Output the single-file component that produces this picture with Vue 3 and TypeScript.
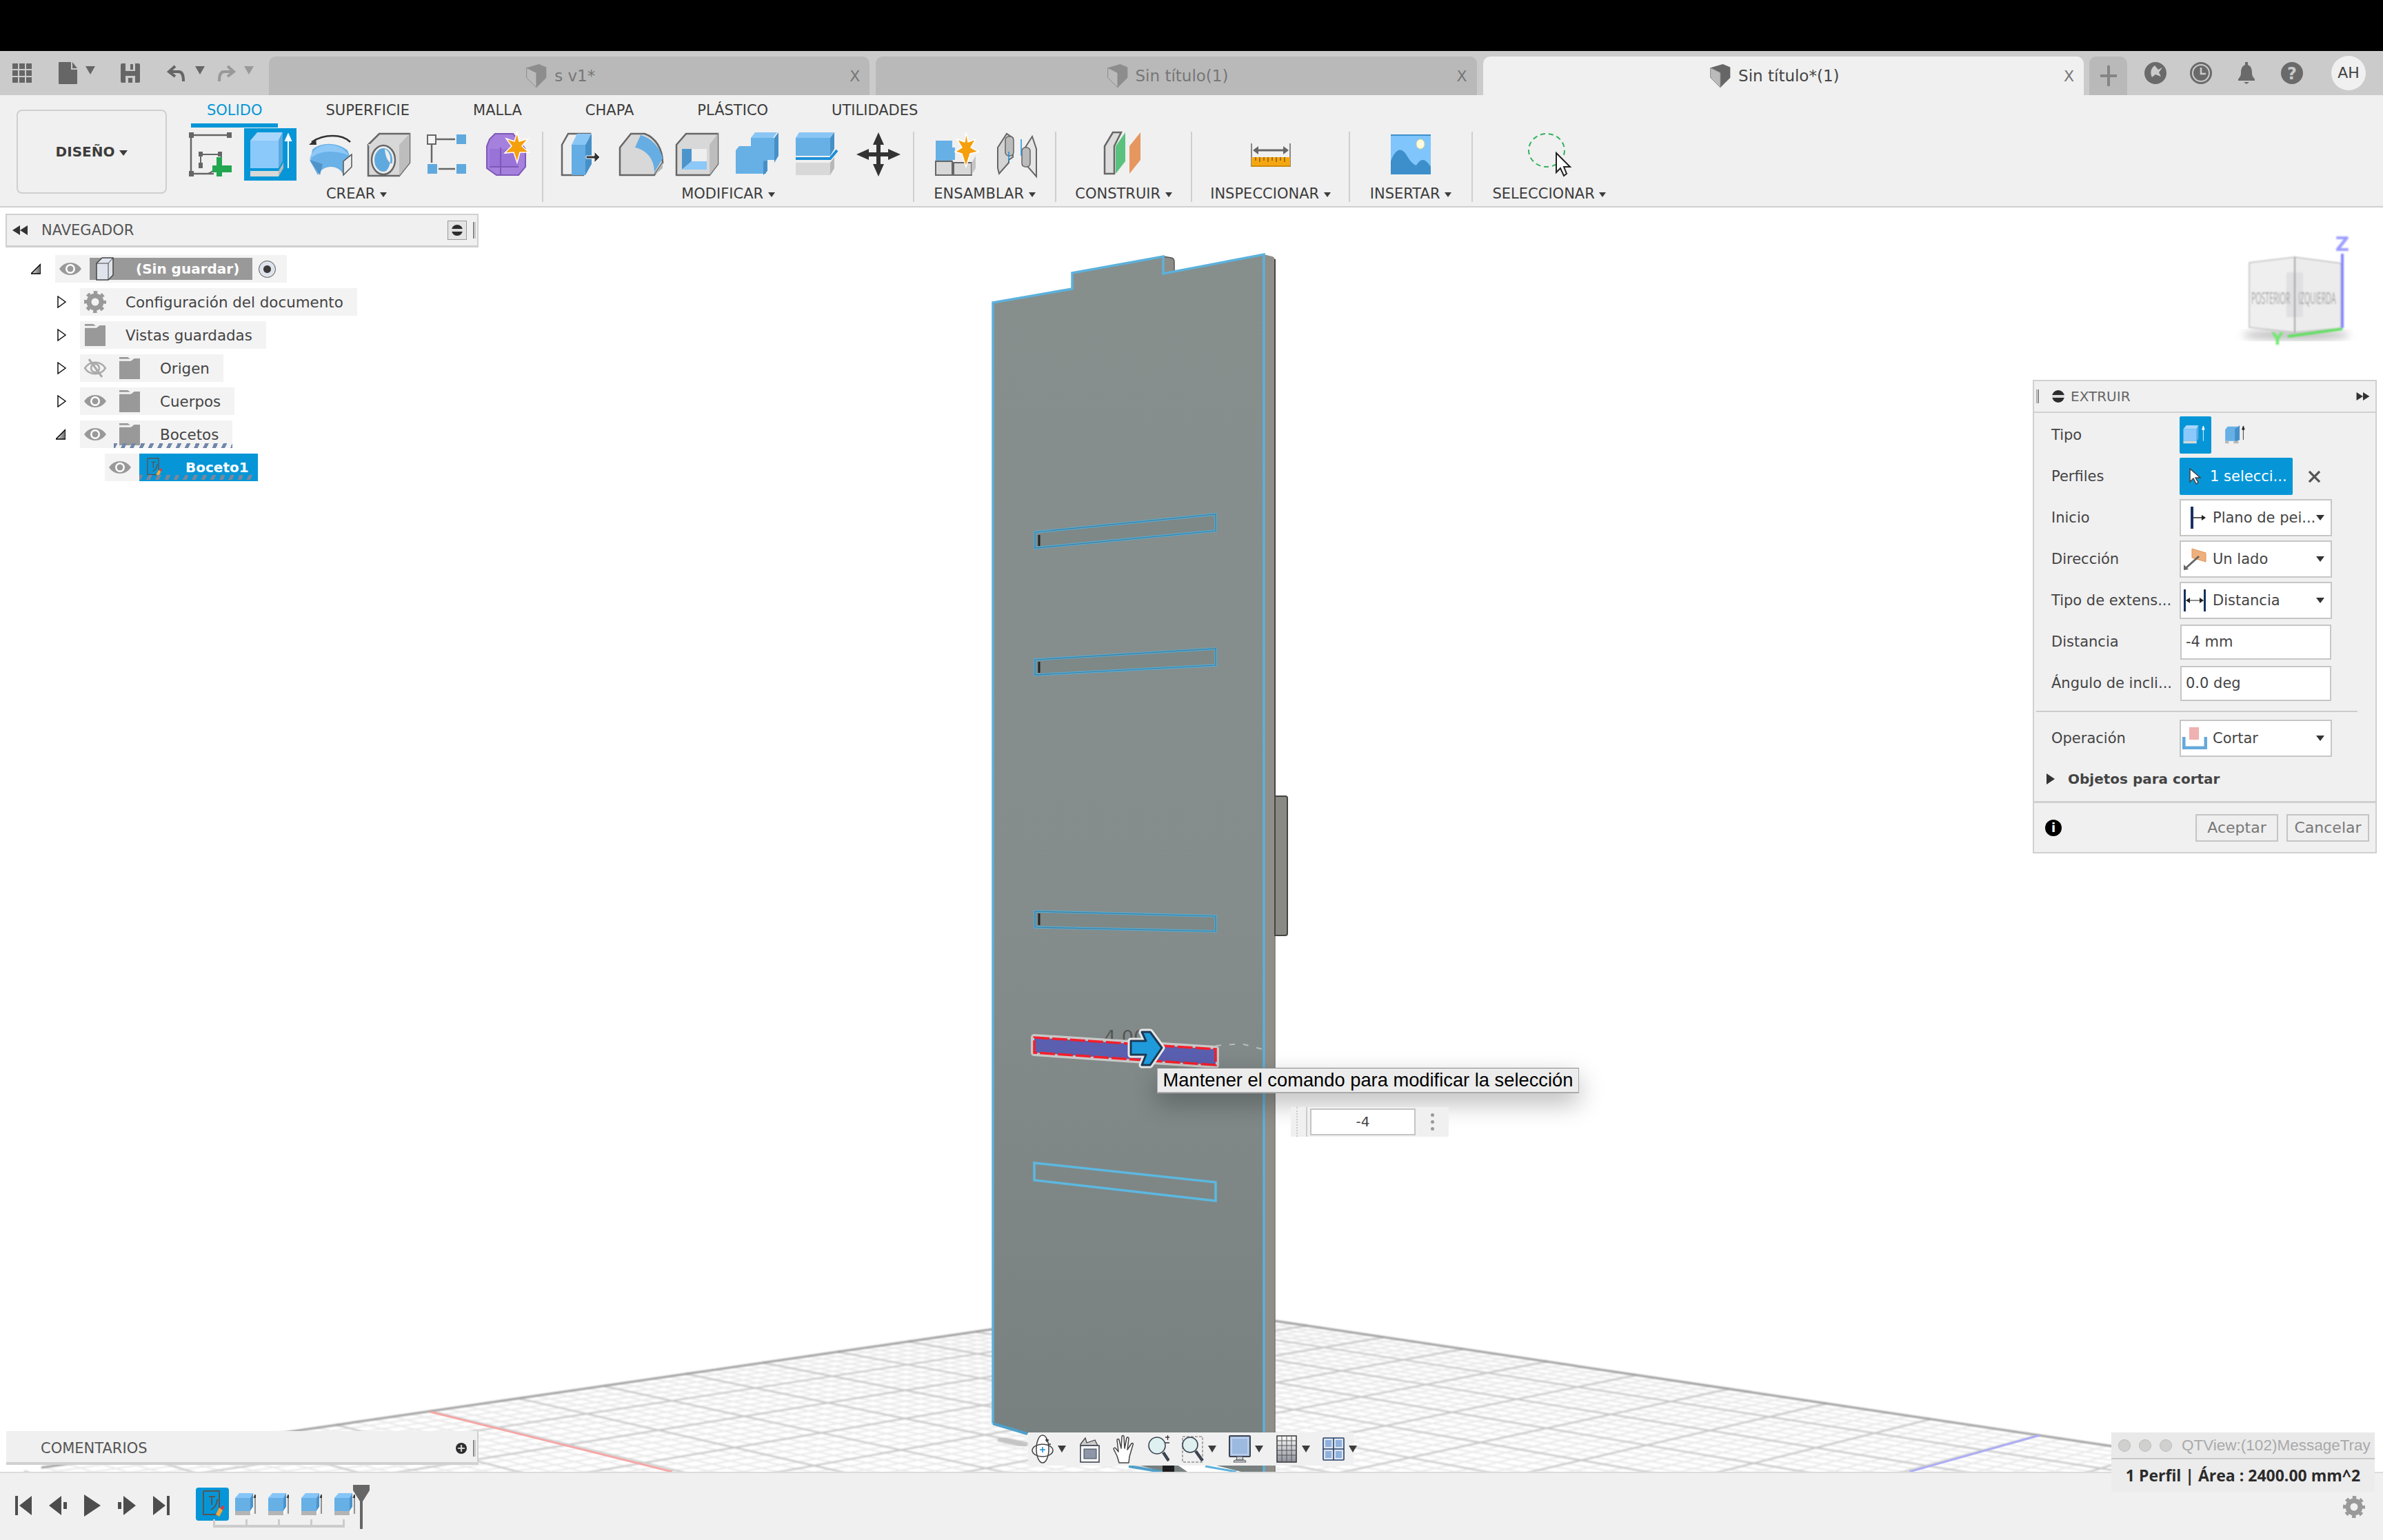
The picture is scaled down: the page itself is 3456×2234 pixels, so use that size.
<template>
  <div class="app">
    <svg class="defs" width="0" height="0" aria-hidden="true">
      <symbol id="eye" viewBox="0 0 32 28">
        <path d="M0 14C8 2 24 2 32 14C24 26 8 26 0 14Z" fill="#999" />
        <circle cx="16" cy="14" r="7" fill="#fff" />
        <circle cx="16" cy="14" r="4.5" fill="#999" />
      </symbol>
      <symbol id="eye-off" viewBox="0 0 32 28">
        <path d="M1 14C8 3 24 3 31 14C24 25 8 25 1 14Z" fill="none" stroke="#aaa" stroke-width="2.5" />
        <circle cx="16" cy="14" r="6" fill="none" stroke="#aaa" stroke-width="2.5" />
        <path d="M7 1L26 27" stroke="#aaa" stroke-width="3" />
      </symbol>
      <symbol id="folder" viewBox="0 0 32 34">
        <path d="M0 0H13L17 3H0ZM0 6H18L23 2H32V34H0Z" fill="#999" />
      </symbol>
      <symbol id="gear" viewBox="0 0 32 32">
        <circle cx="16" cy="16" r="9" fill="none" stroke="currentColor" stroke-width="7" />
        <circle cx="16" cy="16" r="14" fill="none" stroke="currentColor" stroke-width="4" stroke-dasharray="5.5 5.5" stroke-dashoffset="2.7" />
      </symbol>
      <symbol id="block" viewBox="0 0 30 32">
        <path d="M0 7L6 0H26L22 7Z" fill="#86c5f8" />
        <path d="M0 7H22V26H0Z" fill="#66b0e6" />
        <path d="M22 7L26 0V20L22 26Z" fill="#4a93cb" />
        <path d="M0 26H22V32H0Z" fill="#b4b4b4" />
        <path d="M22 26L26 20V25L22 32Z" fill="#fff" />
        <path d="M29 30V4M27 7L29 2L30 7" fill="#333" stroke="#333" stroke-width="1" />
      </symbol>
      <symbol id="sketch" viewBox="0 0 40 46">
        <path d="M7 4H30V38M7 4V38H26" fill="none" stroke="#555" stroke-width="2" />
        <path d="M15 12H24M19 12V24M27 16C27 24 22 29 18 31" fill="none" stroke="#555" stroke-width="2" />
        <path d="M31 34L36 26" stroke="#e33" stroke-width="4" />
        <path d="M25 38L30 28L35 32L30 41Z" fill="#f2a93a" />
      </symbol>
    </svg>

    <div class="black-bar"></div>

    <header class="tabbar">
      <div class="quick">
        <svg class="q-grid" viewBox="0 0 28 28"><path d="M0 0h8v8H0zM10 0h8v8h-8zM20 0h8v8h-8zM0 10h8v8H0zM10 10h8v8h-8zM20 10h8v8h-8zM0 20h8v8H0zM10 20h8v8h-8zM20 20h8v8h-8z" fill="#666" /></svg>
        <svg class="q-file" viewBox="0 0 27 32"><path d="M0 1Q0 0 1 0H18V11H27V31Q27 32 26 32H1Q0 32 0 31ZM20 0L27 9H20Z" fill="#666" /></svg>
        <span class="caret q-caret-file"></span>
        <svg class="q-save" viewBox="0 0 28 28"><path d="M2 0H26Q28 0 28 2V26Q28 28 26 28H2Q0 28 0 26V2Q0 0 2 0ZM7 0V11H21V0ZM7 18V28H21V18Z" fill="#666" fill-rule="evenodd" /><path d="M14 1h4v8h-4zM11 21h6v7h-6z" fill="#666" /></svg>
        <svg class="q-undo" viewBox="0 0 28 24"><path d="M12 2L3 10L12 17M4 10H17C23 10 24 16 24 24" fill="none" stroke="#666" stroke-width="4" /></svg>
        <span class="caret q-caret-undo"></span>
        <svg class="q-redo" viewBox="0 0 28 24"><path d="M16 2L25 10L16 17M24 10H11C5 10 4 16 4 24" fill="none" stroke="#999" stroke-width="4" /></svg>
        <span class="caret caret-light q-caret-redo"></span>
      </div>
      <div class="doc-tabs">
        <div v-for="tab in docTabs" :key="tab.title" class="doc-tab" :class="{ active: tab.active }">
          <span class="doc-title">
            <svg class="doc-icon" viewBox="0 0 32 38">
              <path d="M0 6L20 0L32 5V22L16 38L0 22Z" :fill="tab.active ? '#666' : '#8d8d8d'" />
              <path d="M0 6L16 14V38L0 22Z" fill="#bbb" stroke="#8a8a8a" stroke-width="1" />
            </svg>
            {{ tab.title }}
          </span>
          <span class="doc-close">X</span>
        </div>
      </div>
      <div class="plus-tab">
        <svg viewBox="0 0 24 30" width="24" height="30"><path d="M10 0h4v13h10v4H14v13h-4V17H0v-4h10z" fill="#858585" /></svg>
      </div>
      <div class="account">
        <svg viewBox="0 0 32 32" width="32" height="32"><circle cx="16" cy="16" r="16" fill="#6a6a6a" /><path d="M15 5L20 11L26 8L21 15L24 21L16 18L11 22C8 16 9 9 15 5Z" fill="#cbcbcb" /></svg>
        <svg viewBox="0 0 32 32" width="32" height="32"><circle cx="16" cy="16" r="14.5" fill="#cbcbcb" stroke="#6a6a6a" stroke-width="3" /><circle cx="16" cy="16" r="11" fill="#6a6a6a" /><path d="M16 8V17H23" fill="none" stroke="#cbcbcb" stroke-width="2.5" /></svg>
        <svg viewBox="0 0 32 32" width="32" height="32"><path d="M14 0h4v4c5 2 6 7 6 12c0 5 3 7 4 9V27H4V25c1-2 4-4 4-9c0-5 1-10 6-12zM12 29h8l-4 3z" fill="#6a6a6a" /></svg>
        <svg viewBox="0 0 32 32" width="32" height="32"><circle cx="16" cy="16" r="16" fill="#6a6a6a" /><text x="16" y="25" text-anchor="middle" class="help-mark">?</text></svg>
        <span class="avatar">AH</span>
      </div>
    </header>

    <section class="ribbon">
      <button class="design-btn">DISEÑO <span class="caret"></span></button>
      <div class="ribbon-main">
        <nav class="ribbon-tabs">
          <span v-for="(name, i) in ribbonTabs" :key="name" class="ribbon-tab" :class="{ active: i === 0 }">{{ name }}</span>
        </nav>
        <div class="groups">
          <div class="group g-create">
            <div class="icons">
              <svg class="ico" viewBox="0 0 64 64">
                <path d="M3 4H60M3 4V60M3 60H36" fill="none" stroke="#666" stroke-width="2.5" />
                <path d="M0 0h7v8H0zM55 0h7v8h-7zM0 56h7v8H0zM14 28h6v7h-6zM42 28h6v7h-6zM14 52h6v-8h-6z" fill="#666" />
                <path d="M19 32H44M17 34V48M47 35C46 48 38 55 28 60" fill="none" stroke="#666" stroke-width="2" />
                <path d="M42 36h8v12h14v10H50v6h-8V58H36V48h6z" fill="#22a650" transform="translate(-2 0)" />
              </svg>
              <div class="ico-active">
                <svg viewBox="0 0 76 76" width="76" height="76">
                  <path d="M9 18L19 6H56L50 18Z" fill="#a9d6fb" />
                  <path d="M9 18H50V58H9Z" fill="#8bc9fb" />
                  <path d="M50 18L56 6V48L50 58Z" fill="#5da8e0" />
                  <path d="M9 62H50V70H9Z" fill="#d8d8d8" />
                  <path d="M50 62L57 50V58L50 70Z" fill="#b8b8b8" />
                  <path d="M64 58V12M60 18L64 9L68 18Z" stroke="#fff" stroke-width="2" fill="#fff" />
                </svg>
              </div>
              <svg class="ico" viewBox="0 0 64 64">
                <path d="M4 42L7 25C20 14 42 14 58 26L61 34L52 62C46 46 22 46 15 62Z" fill="#69b1e6" />
                <path d="M3 40C6 22 22 18 31 18C44 18 54 24 60 34C56 31 44 28 32 28C20 28 9 32 3 40Z" fill="#8ec8f7" />
                <path d="M3 40L18 62L22 46Z" fill="#4f93c9" />
                <path d="M52 42L64 32V50L52 62Z" fill="#eee" stroke="#555" stroke-width="1.5" />
                <path d="M62 14C50 2 24 2 6 14" fill="none" stroke="#333" stroke-width="2.5" />
                <path d="M2 18L12 9L13 18Z" fill="#333" />
              </svg>
              <svg class="ico" viewBox="0 0 64 64">
                <path d="M2 18L18 2H62V44L47 63H2Z" fill="#d8d8d8" stroke="#666" stroke-width="2.5" />
                <path d="M47 18L62 2V44L47 63Z" fill="#bdbdbd" />
                <path d="M2 18H47" stroke="#d8d8d8" stroke-width="2" />
                <ellipse cx="24" cy="40" rx="17" ry="21" fill="#eee" stroke="#666" stroke-width="2.5" />
                <ellipse cx="24" cy="40" rx="13" ry="17" fill="#5fa9de" />
                <path d="M26 24C27 38 32 44 37 46C34 56 26 58 26 58C36 50 38 30 26 24Z" fill="#eee" />
              </svg>
              <svg class="ico" viewBox="0 0 64 64">
                <rect x="2" y="4" width="12" height="13" fill="#f4f4f4" stroke="#666" stroke-width="2" />
                <rect x="44" y="3" width="14" height="14" fill="#5fa9de" />
                <rect x="2" y="46" width="14" height="14" fill="#5fa9de" />
                <rect x="44" y="46" width="14" height="14" fill="#5fa9de" />
                <path d="M14 10H42M8 18V44M18 53H42" stroke="#666" stroke-width="2.5" />
              </svg>
              <svg class="ico" viewBox="0 0 64 64">
                <path d="M6 10L14 2H40L58 24V50L48 62H16L2 52V20Z" fill="#a680dd" stroke="#7e58b8" stroke-width="2" />
                <path d="M6 24H48V50H6Z" fill="#9a73d8" />
                <path d="M6 50H48M22 22V62" stroke="#7e58b8" stroke-width="2" fill="none" />
                <path d="M46 0L49 13L62 9L53 20L63 29L50 29L46 44L41 29L28 30L38 20L30 9L42 13Z" fill="#f59f0a" stroke="#fff" stroke-width="1.5" />
              </svg>
            </div>
            <div class="group-label label-create">CREAR <span class="caret"></span></div>
          </div>

          <div class="group g-modify">
            <div class="icons icons-modify">
              <svg class="ico" viewBox="0 0 64 64">
                <path d="M11 60V18L20 2H52V46L42 62H11Z" fill="#eee" stroke="#666" stroke-width="2.5" />
                <path d="M25 18L33 2H54L45 18Z" fill="#8ac6f5" />
                <path d="M25 18H45V62H25Z" fill="#63ade4" />
                <path d="M45 18L54 2V46L45 62Z" fill="#4690c8" />
                <path d="M46 34H58V28L66 36L58 44V38H46Z" fill="#333" stroke="#fff" stroke-width="1" />
              </svg>
              <svg class="ico" viewBox="-7 0 64 64">
                <path d="M0 22L16 2H36C52 8 62 24 62 44L50 62H0Z" fill="#d8d8d8" stroke="#666" stroke-width="2.5" />
                <path d="M30 4C46 8 60 24 62 38L50 58C50 40 40 26 22 22Z" fill="#66ade3" />
                <path d="M50 62L62 44V52L50 62Z" fill="#b8b8b8" />
              </svg>
              <svg class="ico" viewBox="0 0 64 64">
                <path d="M2 18L16 2H62V46L50 62H2Z" fill="#d8d8d8" stroke="#666" stroke-width="2.5" />
                <path d="M10 24H46V54H10Z" fill="#eee" />
                <path d="M10 24H24V42L10 54Z" fill="#4c94cc" />
                <path d="M24 42H46V54H10Z" fill="#8cc8f8" />
                <path d="M50 62L62 46V2L50 18Z" fill="#bdbdbd" />
              </svg>
              <svg class="ico" viewBox="0 0 64 64">
                <path d="M22 8L28 0H60L54 8Z" fill="#8ac6f5" />
                <path d="M22 8H56V40H44V60H0V26L5 20H22Z" fill="#66b0e6" />
                <path d="M56 8L62 0V34L56 44ZM40 42L46 40V56L40 62Z" fill="#4690c8" />
              </svg>
              <svg class="ico" viewBox="0 0 64 64">
                <path d="M0 8L5 0H56L50 8Z" fill="#8ac6f5" />
                <path d="M0 8H50V34H0Z" fill="#66b0e6" />
                <path d="M50 8L56 0V24L50 34Z" fill="#4690c8" />
                <path d="M0 38H50L60 26" fill="none" stroke="#1d8ed8" stroke-width="4" />
                <path d="M0 44H50V62H0Z" fill="#d8d8d8" />
                <path d="M50 44L56 36V52L50 62Z" fill="#b8b8b8" />
              </svg>
              <svg class="ico" viewBox="0 0 64 64">
                <path d="M32 0L40 18H35V29H46V24L64 32L46 40V35H35V46H40L32 64L24 46H29V35H18V40L0 32L18 24V29H29V18H24Z" fill="#333" />
              </svg>
            </div>
            <div class="group-label">MODIFICAR <span class="caret"></span></div>
          </div>

          <div class="group g-assemble">
            <div class="icons icons-assemble">
              <svg class="ico" viewBox="0 0 64 64">
                <path d="M0 30L4 22H28V40H0Z" fill="#66b0e6" />
                <path d="M2 12H26V42H2Z" fill="#66b0e6" transform="translate(-2 0)" />
                <path d="M0 42H24V62H0ZM26 44H52V62H26Z" fill="#d8d8d8" stroke="#666" stroke-width="2" />
                <path d="M52 44L58 34V52L52 62Z" fill="#c4c4c4" />
                <path d="M44 0L47 14L58 10L51 22L62 28L50 31L44 50L38 31L28 28L38 22L31 10L42 14Z" fill="#f59f0a" stroke="#fff" stroke-width="1.5" />
              </svg>
              <svg class="ico" viewBox="0 0 64 64">
                <path d="M2 52L2 22L15 2L24 8V36L18 40V44L4 60Z" fill="#d4d4d4" stroke="#666" stroke-width="2" />
                <path d="M38 28L52 6L58 24V64L44 48H38Z" fill="#e6e6e6" stroke="#666" stroke-width="2" />
                <rect x="13" y="6" width="12" height="28" rx="5" fill="#bbb" stroke="#666" stroke-width="1.5" />
                <rect x="37" y="22" width="12" height="28" rx="5" fill="#bbb" stroke="#666" stroke-width="1.5" />
                <path d="M18 28V42M36 10V34" stroke="#1d8ed8" stroke-width="1.5" />
              </svg>
            </div>
            <div class="group-label">ENSAMBLAR <span class="caret"></span></div>
          </div>

          <div class="group g-build">
            <div class="icons">
              <svg class="ico" viewBox="0 0 64 64">
                <path d="M4 60V20L16 0H28L18 20V60Z" fill="#dcdcdc" stroke="#666" stroke-width="2.5" />
                <path d="M20 60V20L34 0V42Z" fill="#5ac27e" />
                <path d="M42 60V20L58 0V40Z" fill="#e6965f" transform="translate(-2 0)" />
              </svg>
            </div>
            <div class="group-label">CONSTRUIR <span class="caret"></span></div>
          </div>

          <div class="group g-inspect">
            <div class="icons">
              <svg class="ico" viewBox="0 0 64 64">
                <path d="M4 16V50M60 16V50" stroke="#666" stroke-width="1.5" />
                <path d="M8 26H56" stroke="#666" stroke-width="3" />
                <path d="M6 26L14 20V32ZM58 26L50 20V32Z" fill="#666" />
                <rect x="4" y="36" width="56" height="12" fill="#f5a711" />
                <rect x="4" y="48" width="56" height="2" fill="#cf8b0b" />
                <path d="M10 36v5M16 36v7M22 36v5M28 36v7M34 36v5M40 36v7M46 36v5M52 36v7" stroke="#8a5d08" stroke-width="1.5" />
              </svg>
            </div>
            <div class="group-label">INSPECCIONAR <span class="caret"></span></div>
          </div>

          <div class="group g-insert">
            <div class="icons">
              <svg class="ico" viewBox="0 0 64 64">
                <rect x="3" y="3" width="58" height="58" fill="#80c5fb" />
                <rect x="3" y="3" width="58" height="2" fill="#3c90cd" />
                <ellipse cx="46" cy="17" rx="6" ry="7" fill="#fffbe0" stroke="#d9d88f" stroke-width="1" />
                <path d="M3 61V42C8 28 16 20 24 30C30 40 34 46 40 48C46 38 52 36 61 50V61Z" fill="#3c8fcb" />
              </svg>
            </div>
            <div class="group-label">INSERTAR <span class="caret"></span></div>
          </div>

          <div class="group g-select">
            <div class="icons">
              <svg class="ico" viewBox="0 0 64 64">
                <ellipse cx="28" cy="26" rx="26" ry="24" fill="none" stroke="#2fb35f" stroke-width="2" stroke-dasharray="7 5" />
                <path d="M42 30V58L48 52L53 63L57 60L53 50L62 50Z" fill="#fff" stroke="#222" stroke-width="2" />
              </svg>
            </div>
            <div class="group-label">SELECCIONAR <span class="caret"></span></div>
          </div>
        </div>
      </div>
    </section>

    <main class="viewport">
      <svg class="scene" viewBox="0 301 3456 1834" width="3456" height="1834">
        <defs>
          <linearGradient id="face" x1="0" y1="0" x2="0" y2="1">
            <stop offset="0" stop-color="#868f8c" />
            <stop offset="0.55" stop-color="#848d8c" />
            <stop offset="1" stop-color="#77807f" />
          </linearGradient>
          <filter id="soft"><feGaussianBlur stdDeviation="0.8" /></filter>
          <filter id="softer"><feGaussianBlur stdDeviation="6" /></filter>
        </defs>

        <g filter="url(#soft)">
          <line v-for="(l, i) in gridLines" :key="i" :x1="l.x1" :y1="l.y1" :x2="l.x2" :y2="l.y2" :stroke="l.color" :stroke-width="l.width" />
        </g>
        <path d="M60 2129L420 2077L1441 1928M1848 1916L3070 2099" fill="none" stroke="#9a9a9a" stroke-width="3" filter="url(#soft)" />
        <path d="M1447 2087L1490 2097" stroke="#c4c4c4" stroke-width="8" filter="url(#soft)" />

        <path d="M1687 372L1699 374Q1703 375 1703 380V394L1687 398Z" fill="#8e8d87" stroke="#555" stroke-width="1.5" />
        <path d="M1833 369L1845 372Q1849 373 1849 378V2135H1833Z" fill="#8f8e88" />
        <path d="M1849 376V1155" stroke="#444" stroke-width="2" />
        <path d="M1849 1357V2135" stroke="#777" stroke-width="1.5" />
        <path d="M1849 1155H1864Q1867 1155 1867 1158V1354Q1867 1357 1864 1357H1849Z" fill="#8a8a85" stroke="#444" stroke-width="2" />
        <path d="M1439 439L1555 419V396L1687 372V397L1833 369V2135H1686L1440 2065Z" fill="url(#face)" />
        <path d="M1440 2065V439L1555 419V396L1687 372V397L1833 369V2135" fill="none" stroke="#5cb1dc" stroke-width="3.5" />
        <path d="M1440 2065L1490 2080M1637 2127L1684 2135" stroke="#4e9fca" stroke-width="4" />
        <path d="M1686 2122H1703V2135H1686Z" fill="#1c1c1c" />
        <path d="M1703 2122H1748L1800 2135H1722Z" fill="#fff" />
        <path d="M1748 2127L1793 2135" stroke="#5cb1dc" stroke-width="3" />

        <g v-for="slot in slots" :key="slot.id">
          <polygon :points="slot.points" fill="#7e8886" />
          <polygon :points="slot.points" fill="none" stroke="#55aed9" stroke-width="3.5" />
          <polygon :points="slot.points" fill="none" stroke="#2f5a72" stroke-width="1.2" opacity="0.6" />
          <path :d="slot.wall" stroke="#222" stroke-width="3" />
        </g>

        <text x="1601" y="1514" class="dim-text">4.00</text>
        <polygon points="1500,1505 1763,1522 1763,1545 1500,1527" fill="#5a5fb0" stroke="#c8c8c8" stroke-width="10" stroke-linejoin="round" />
        <polygon points="1500,1505 1763,1522 1763,1545 1500,1527" fill="#5a5fb0" stroke="#f21f2b" stroke-width="3.5" stroke-dasharray="22 4" />
        <path d="M1763 1517L1800 1514L1838 1524" fill="none" stroke="#bbb" stroke-width="2" stroke-dasharray="8 12" />
        <path d="M1640 1510H1662L1656 1497H1668L1685 1520L1668 1545H1656L1662 1530H1640Z" fill="#1f9bdc" stroke="#e8e8e8" stroke-width="9" stroke-linejoin="round" />
        <path d="M1640 1510H1662L1656 1497H1668L1685 1520L1668 1545H1656L1662 1530H1640Z" fill="#1f9bdc" stroke="#1d3a55" stroke-width="3" stroke-linejoin="round" />

        <polygon points="1500,1687 1763,1715 1763,1742 1500,1712" fill="none" stroke="#5cb8e0" stroke-width="3.5" />

        <line x1="624" y1="2048" x2="975" y2="2135" stroke="#f6a6a6" stroke-width="3" />
        <line x1="2958" y1="2082" x2="2769" y2="2135" stroke="#adadf6" stroke-width="3" />

        <ellipse cx="3330" cy="486" rx="78" ry="7" fill="#bbb" filter="url(#softer)" />
        <g filter="url(#soft)">
          <polygon points="3262,381 3328,373 3328,482 3262,475" fill="#efefef" stroke="#bbb" stroke-width="1.5" />
          <polygon points="3328,373 3395,382 3395,476 3328,482" fill="#ececec" stroke="#bbb" stroke-width="1.5" />
          <rect x="3316" y="395" width="24" height="65" fill="#e0e0e2" />
          <line x1="3328" y1="373" x2="3328" y2="482" stroke="#999" stroke-width="2" />
          <g transform="translate(3265 441) scale(0.44 1)"><text class="cube-text">POSTERIOR</text></g>
          <g transform="translate(3333 441) scale(0.44 1)"><text class="cube-text">IZQUIERDA</text></g>
          <line x1="3397" y1="368" x2="3397" y2="476" stroke="#8585ff" stroke-width="4" />
          <line x1="3318" y1="488" x2="3397" y2="477" stroke="#5fe05f" stroke-width="4" />
          <text x="3397" y="364" class="axis-z">Z</text>
          <text x="3303" y="500" class="axis-y">Y</text>
        </g>
      </svg>

      <div class="nav-panel">
        <div class="nav-head">
          <svg viewBox="0 0 22 14" width="22" height="14"><path d="M11 0V14L0 7ZM22 0V14L11 7Z" fill="#333" /></svg>
          <span class="nav-title">NAVEGADOR</span>
          <span class="pin-btn"><span class="pin-minus"></span></span>
          <span class="sizer"></span>
        </div>
      </div>

      <ul class="tree">
        <li v-for="row in treeRows" :key="row.label" class="tree-line" :class="'depth-' + row.depth">
          <span class="twist">
            <svg v-if="row.open !== undefined" :class="row.open ? 'tw-open' : 'tw-closed'" viewBox="0 0 14 18">
              <path v-if="row.open" d="M14 2V16H0Z" fill="url(#twistFill)" stroke="#000" stroke-width="1.5" />
              <path v-else d="M1 1L12 9L1 17Z" fill="#fff" stroke="#111" stroke-width="1.5" />
            </svg>
          </span>
          <div class="tree-row" :class="{ wavy: row.wavy }">
            <svg v-if="row.eye" class="row-ico" viewBox="0 0 32 28"><use :href="row.eye === 'off' ? '#eye-off' : '#eye'" /></svg>
            <div v-if="row.kind === 'root'" class="root-label">
              <svg class="root-cube" viewBox="0 0 26 34">
                <path d="M1 9L9 1H25V26L18 33H1Z" fill="#dfe3ec" stroke="#444" stroke-width="1.5" />
                <path d="M1 9H18V33M18 9L25 1" fill="none" stroke="#444" stroke-width="1" />
              </svg>
              <span>{{ row.label }}</span>
            </div>
            <div v-else-if="row.kind === 'active'" class="active-label">
              <svg class="act-sketch" viewBox="0 0 40 46"><use href="#sketch" /></svg>
              <span>{{ row.label }}</span>
              <i class="wave wave-active"></i>
            </div>
            <template v-else>
              <svg v-if="row.kind === 'gear'" class="row-ico gear-ico" viewBox="0 0 32 32"><use href="#gear" /></svg>
              <svg v-else class="row-ico" viewBox="0 0 32 34"><use href="#folder" /></svg>
              <span class="row-text">{{ row.label }}</span>
              <i v-if="row.wavy" class="wave"></i>
            </template>
            <span v-if="row.kind === 'root'" class="radio"></span>
          </div>
        </li>
      </ul>

      <aside class="extrude">
        <div class="ex-head">
          <span class="ex-sizer"></span>
          <span class="ex-pin"></span>
          <span class="ex-title">EXTRUIR</span>
          <svg class="ex-arrows" viewBox="0 0 22 14" width="20" height="12"><path d="M0 0V14L11 7ZM11 0V14L22 7Z" fill="#333" /></svg>
        </div>
        <div class="ex-body">
          <div class="ex-row">
            <span class="ex-label">Tipo</span>
            <div class="type-btns">
              <span class="type-on">
                <svg viewBox="0 0 40 32" width="36" height="28">
                  <path d="M0 6L5 0H25L22 6Z" fill="#a9d6fb" /><path d="M0 6H22V26H0Z" fill="#8bc9fb" /><path d="M22 6L25 0V22L22 26Z" fill="#5da8e0" />
                  <path d="M0 26H22V30H0Z" fill="#d8d8d8" /><path d="M33 26V3M31 7L33 1L35 7Z" stroke="#fff" fill="#fff" />
                </svg>
              </span>
              <svg class="type-off" viewBox="0 0 34 32" width="30" height="28">
                <path d="M0 7L4 2H20V26H0Z" fill="#66b0e6" /><path d="M16 6L24 0V24L16 28Z" fill="#4690c8" /><path d="M0 26H6V30H0ZM14 26H22V30H14Z" fill="#b8b8b8" />
                <path d="M30 24V3M28 7L30 1L32 7Z" stroke="#222" fill="#222" />
              </svg>
            </div>
          </div>
          <div class="ex-row">
            <span class="ex-label">Perfiles</span>
            <div class="sel-wrap">
              <span class="sel-btn">
                <svg viewBox="0 0 20 24" width="20" height="24"><path d="M2 1V20L7 15L11 23L14 21L10 14H17Z" fill="#fff" stroke="#444" stroke-width="1.5" /></svg>
                1 selecci...
              </span>
              <svg viewBox="0 0 20 18" width="19" height="17"><path d="M2 1L18 17M18 1L2 17" stroke="#555" stroke-width="3.5" /></svg>
            </div>
          </div>
          <div class="ex-row">
            <span class="ex-label">Inicio</span>
            <div class="field select">
              <svg class="fld-ico" viewBox="0 0 36 32"><path d="M12 0h4v32h-4z" fill="#17315f" /><path d="M16 16H30" stroke="#222" stroke-width="1.5" /><path d="M28 12L34 16L28 20Z" fill="#222" /></svg>
              <span>Plano de pei...</span><span class="caret fld-caret-tight"></span>
            </div>
          </div>
          <div class="ex-row">
            <span class="ex-label">Dirección</span>
            <div class="field select">
              <svg class="fld-ico" viewBox="0 0 36 32"><path d="M14 1L34 7V20L14 14Z" fill="#eeb07d" stroke="#e0955c" stroke-width="1" /><path d="M24 12L4 30" stroke="#666" stroke-width="3" /><path d="M2 32V24L9 31Z" fill="#666" /></svg>
              <span>Un lado</span><span class="caret fld-caret"></span>
            </div>
          </div>
          <div class="ex-row">
            <span class="ex-label">Tipo de extens...</span>
            <div class="field select">
              <svg class="fld-ico" viewBox="0 0 36 32"><path d="M2 0h3v32H2zM31 0h3v32h-3z" fill="#17315f" /><path d="M6 16H30" stroke="#222" stroke-width="1" /><path d="M5 16L11 12V20ZM31 16L25 12V20Z" fill="#222" /></svg>
              <span>Distancia</span><span class="caret fld-caret"></span>
            </div>
          </div>
          <div class="ex-row">
            <span class="ex-label">Distancia</span>
            <div class="field input">-4 mm</div>
          </div>
          <div class="ex-row">
            <span class="ex-label">Ángulo de incli...</span>
            <div class="field input">0.0 deg</div>
          </div>
          <div class="ex-divider"></div>
          <div class="ex-row">
            <span class="ex-label">Operación</span>
            <div class="field select">
              <svg class="fld-ico" viewBox="0 0 36 32"><path d="M10 0H24V18H10Z" fill="#efb1b1" /><path d="M2 14V30H34V14" fill="none" stroke="#66a9dc" stroke-width="5" /></svg>
              <span>Cortar</span><span class="caret fld-caret"></span>
            </div>
          </div>
          <div class="ex-objects">
            <span class="tri-right"></span>
            <b>Objetos para cortar</b>
          </div>
        </div>
        <div class="ex-foot">
          <span class="info">i</span>
          <button class="ex-btn">Aceptar</button>
          <button class="ex-btn">Cancelar</button>
        </div>
      </aside>

      <div class="tooltip">Mantener el comando para modificar la selección</div>

      <div class="num-box">
        <span class="num-grip"></span>
        <span class="num-input">-4</span>
        <span class="num-dots"><i></i><i></i><i></i></span>
      </div>

      <div class="comments">
        <span class="nav-title">COMENTARIOS</span>
        <span class="plus-badge"></span>
        <span class="sizer"></span>
      </div>

      <div class="nav-tools">
        <div class="tool">
          <svg viewBox="0 0 32 42" class="tool-ico">
            <ellipse cx="16" cy="21" rx="9" ry="20" fill="#fff" stroke="#444" stroke-width="1.5" />
            <ellipse cx="16" cy="23" rx="15" ry="9" fill="none" stroke="#444" stroke-width="1.5" />
            <path d="M16 18v8M12 22h8" stroke="#1d8ed8" stroke-width="1.6" />
            <path d="M20 8h5M22 6v5M24 14h4" stroke="#333" stroke-width="1.4" />
          </svg>
          <span class="caret tool-caret"></span>
        </div>
        <div class="tool">
          <svg viewBox="0 0 32 42" class="tool-ico">
            <path d="M3 14L10 5L12 12L24 8L28 16H3Z" fill="#ccc" stroke="#444" stroke-width="1.3" />
            <rect x="3" y="16" width="27" height="24" fill="#fff" stroke="#3d4452" stroke-width="1.6" />
            <rect x="8" y="21" width="18" height="14" fill="#8e97a8" stroke="#3d4452" stroke-width="1" />
          </svg>
        </div>
        <div class="tool">
          <svg viewBox="0 0 32 42" class="tool-ico">
            <path d="M6 31L1 21C1 19 3 19 4 20L8 25L6 8C6 6 9 6 9 8L12 20L13 3C13 1 16 1 16 3L17 20L20 5C21 3 23 4 23 6L21 22L27 13C29 12 30 13 29 15L24 32L23 41H9Z" fill="#fff" stroke="#444" stroke-width="1.5" stroke-linejoin="round" />
          </svg>
        </div>
        <div class="tool">
          <svg viewBox="0 0 32 42" class="tool-ico">
            <circle cx="14" cy="16" r="12" fill="#dff0f0" stroke="#3d4452" stroke-width="1.6" />
            <path d="M23 26L31 38" stroke="#3d4452" stroke-width="4.5" />
            <path d="M26 4h7M29.5 1v7M26 12h7" stroke="#333" stroke-width="1.3" />
          </svg>
        </div>
        <div class="tool">
          <svg viewBox="0 0 32 42" class="tool-ico">
            <rect x="1" y="3" width="29" height="37" fill="none" stroke="#666" stroke-width="1" stroke-dasharray="4 2" />
            <circle cx="12" cy="15" r="11" fill="#dff0f0" stroke="#3d4452" stroke-width="1.6" />
            <path d="M20 24L30 38" stroke="#3d4452" stroke-width="4.5" />
          </svg>
          <span class="caret tool-caret"></span>
        </div>
        <div class="tool">
          <svg viewBox="0 0 32 42" class="tool-ico">
            <rect x="1" y="2" width="30" height="30" rx="1" fill="#9cb9e0" stroke="#3d4452" stroke-width="2" />
            <rect x="4" y="5" width="24" height="24" fill="#9cb9e0" stroke="#dfe7f3" stroke-width="1" />
            <path d="M12 32H20L21 37H11ZM7 40Q7 37 10 37H22Q25 37 25 40Z" fill="#cdd2dc" stroke="#555" stroke-width="1" />
          </svg>
          <span class="caret tool-caret"></span>
        </div>
        <div class="tool">
          <svg viewBox="0 0 32 42" class="tool-ico">
            <rect x="2" y="2" width="28" height="38" fill="url(#gridFade)" stroke="#333" stroke-width="1.5" />
            <path d="M2 9H30M2 16H30M2 23H30M2 30H30M9 2V40M16 2V40M23 2V40" stroke="#555" stroke-width="1" />
          </svg>
          <span class="caret tool-caret"></span>
        </div>
        <div class="tool">
          <svg viewBox="0 0 32 42" class="tool-ico">
            <rect x="1" y="5" width="30" height="32" rx="1" fill="#dde5f0" stroke="#27406b" stroke-width="1.6" />
            <path d="M16 5V37M1 21H31" stroke="#27406b" stroke-width="1.6" />
            <path d="M4 8h9v10H4zM19 8h9v10h-9zM4 24h9v10H4zM19 24h9v10h-9z" fill="#8fb1dd" />
          </svg>
          <span class="caret tool-caret"></span>
        </div>
      </div>

      <svg class="defs" width="0" height="0" aria-hidden="true">
        <defs>
          <linearGradient id="twistFill" x1="0" y1="0" x2="1" y2="0">
            <stop offset="0" stop-color="#eee" />
            <stop offset="1" stop-color="#666" />
          </linearGradient>
          <linearGradient id="gridFade" x1="0" y1="0" x2="0" y2="1">
            <stop offset="0" stop-color="#fff" />
            <stop offset="1" stop-color="#8c8f99" />
          </linearGradient>
        </defs>
      </svg>
    </main>

    <footer class="timeline">
      <div class="controls">
        <span class="ctl"><svg viewBox="0 0 24 28" width="24" height="28"><path d="M0 0h4v28H0zM24 0V28L6 14Z" fill="#4d4d4d" /></svg></span>
        <span class="ctl"><svg viewBox="0 0 26 28" width="26" height="28"><path d="M18 0V28L0 14ZM21 9h5v10h-5z" fill="#4d4d4d" /></svg></span>
        <span class="ctl"><svg viewBox="0 0 24 32" width="24" height="32"><path d="M0 0L24 16L0 32Z" fill="#4d4d4d" /></svg></span>
        <span class="ctl"><svg viewBox="0 0 26 28" width="26" height="28"><path d="M8 0V28L26 14ZM0 9h5v10H0z" fill="#4d4d4d" /></svg></span>
        <span class="ctl"><svg viewBox="0 0 24 28" width="24" height="28"><path d="M20 0h4v28h-4zM0 0V28L18 14Z" fill="#4d4d4d" /></svg></span>
      </div>
      <div class="steps">
        <span class="step-active"><svg viewBox="0 0 40 46" width="40" height="46"><use href="#sketch" /></svg></span>
        <span v-for="n in 4" :key="n" class="step"><svg viewBox="0 0 30 32" width="30" height="32"><use href="#block" /></svg></span>
        <div class="bracket"><i v-for="n in 5" :key="n"></i></div>
        <svg class="marker" viewBox="0 0 24 64" width="24" height="64"><path d="M0 0H24V8L14 24V64H10V24L0 8Z" fill="#666" /></svg>
      </div>
      <svg class="tl-gear" viewBox="0 0 32 32" width="32" height="32"><use href="#gear" /></svg>
    </footer>

    <div class="tray">
      <div class="tray-title">
        <i></i><i></i><i></i>
        <span>QTView:(102)MessageTray</span>
      </div>
      <div class="tray-msg">1 Perfil | Área : 2400.00 mm^2</div>
    </div>
  </div>
</template>

<script setup lang="ts">
interface GridLine {
  x1: number
  y1: number
  x2: number
  y2: number
  color: string
  width: number
}

interface TreeRow {
  label: string
  depth: number
  kind: 'root' | 'gear' | 'folder' | 'active'
  open?: boolean
  eye?: 'on' | 'off'
  wavy?: boolean
}

const docTabs = [
  { title: 's v1*', active: false },
  { title: 'Sin título(1)', active: false },
  { title: 'Sin título*(1)', active: true },
]

const ribbonTabs = ['SOLIDO', 'SUPERFICIE', 'MALLA', 'CHAPA', 'PLÁSTICO', 'UTILIDADES']

const treeRows: TreeRow[] = [
  { label: '(Sin guardar)', depth: 0, kind: 'root', open: true, eye: 'on' },
  { label: 'Configuración del documento', depth: 1, kind: 'gear', open: false },
  { label: 'Vistas guardadas', depth: 1, kind: 'folder', open: false },
  { label: 'Origen', depth: 1, kind: 'folder', open: false, eye: 'off' },
  { label: 'Cuerpos', depth: 1, kind: 'folder', open: false, eye: 'on' },
  { label: 'Bocetos', depth: 1, kind: 'folder', open: true, eye: 'on', wavy: true },
  { label: 'Boceto1', depth: 2, kind: 'active', eye: 'on' },
]

const slots = [
  { id: 1, points: '1501,772 1763,746 1763,770 1501,795', wall: 'M1507 776V792' },
  { id: 2, points: '1501,957 1763,941 1763,965 1501,979', wall: 'M1507 960V976' },
  { id: 3, points: '1501,1322 1763,1329 1763,1351 1501,1345', wall: 'M1507 1325V1342' },
]

// floor grid, lines run out of the two vanishing points of the plane
function buildGrid(): GridLine[] {
  const apex = { x: 1688, y: 1892 }
  const vpA = { x: -2806, y: 1218 }
  const vpB = { x: 5986, y: 1264 }
  const lines: GridLine[] = []

  const addFamily = (edgeVp: typeof apex, farVp: typeof apex, step: number) => {
    const s0 = Math.abs(edgeVp.x - apex.x)
    const dir = edgeVp.x > apex.x ? -1 : 1
    for (let i = 1; i < 90; i++) {
      const inv = 1 / s0 - (i / 5) * step
      if (inv <= 0) break
      const s = 1 / inv
      const px = edgeVp.x + dir * s
      const py = edgeVp.y + (apex.y - edgeVp.y) * (s / s0)
      const k = 0.5
      const major = i % 5 === 0
      lines.push({
        x1: Math.round(px),
        y1: Math.round(py),
        x2: Math.round(px + (px - farVp.x) * k),
        y2: Math.round(py + (py - farVp.y) * k),
        color: major ? '#c6c6c6' : '#e8e8e8',
        width: major ? 2.4 : 2,
      })
    }
  }

  addFamily(vpB, vpA, 4.617e-6)
  addFamily(vpA, vpB, 4.9e-6)
  return lines.sort((a, b) => (a.color < b.color ? 1 : -1))
}

const gridLines = buildGrid()
</script>

<style scoped>
.app {
  position: relative;
  width: 3456px;
  height: 2234px;
  display: flex;
  flex-direction: column;
  overflow: hidden;
  background: #fff;
  font-family: "DejaVu Sans", "Open Sans", sans-serif;
  color: #3c3c3c;
}

.defs {
  position: absolute;
}

.black-bar {
  height: 74px;
  flex: none;
  background: #000;
}

.caret {
  display: inline-block;
  width: 0;
  height: 0;
  border-left: 6px solid transparent;
  border-right: 6px solid transparent;
  border-top: 8px solid #3c3c3c;
  vertical-align: middle;
}

.caret-light {
  border-top-color: #999;
}

/* tab strip */
.tabbar {
  height: 64px;
  flex: none;
  display: flex;
  background: #cbcbcb;
}

.quick {
  width: 390px;
  flex: none;
  display: flex;
  align-items: flex-start;
  padding: 16px 0 0 18px;
  box-sizing: border-box;
}

.q-grid { width: 28px; height: 28px; margin-top: 2px; }
.q-file { width: 27px; height: 32px; margin-left: 39px; }
.q-caret-file { margin: 6px 0 0 12px; border-top-color: #666; border-top-width: 12px; border-left-width: 7px; border-right-width: 7px; }
.q-save { width: 28px; height: 28px; margin: 2px 0 0 37px; }
.q-undo { width: 28px; height: 24px; margin: 4px 0 0 39px; }
.q-caret-undo { margin: 6px 0 0 13px; border-top-color: #666; border-top-width: 12px; border-left-width: 7px; border-right-width: 7px; }
.q-redo { width: 28px; height: 24px; margin: 4px 0 0 17px; }
.q-caret-redo { margin: 6px 0 0 12px; border-top-width: 12px; border-left-width: 7px; border-right-width: 7px; }

.doc-tabs {
  display: flex;
  gap: 9px;
  padding-top: 8px;
  width: 2632px;
  flex: none;
}

.doc-tab {
  position: relative;
  flex: 1;
  display: flex;
  align-items: center;
  justify-content: center;
  background: #b9b9b9;
  border-radius: 10px 10px 0 0;
  color: #777;
  font-size: 23px;
}

.doc-tab.active {
  background: #f0f0f0;
  color: #444;
}

.doc-title {
  display: flex;
  align-items: center;
  gap: 10px;
  padding-right: 26px;
}

.doc-icon {
  width: 32px;
  height: 34px;
}

.doc-close {
  position: absolute;
  right: 14px;
  top: 16px;
  color: #777;
  font-size: 22px;
  line-height: 26px;
}

.plus-tab {
  width: 55px;
  margin: 8px 0 0 8px;
  flex: none;
  display: flex;
  align-items: center;
  justify-content: center;
  background: #b9b9b9;
  border-radius: 10px 10px 0 0;
}

.account {
  display: flex;
  align-items: flex-start;
  gap: 34px;
  padding: 16px 0 0 25px;
}

.help-mark {
  font-size: 24px;
  font-weight: 700;
  fill: #cbcbcb;
}

.avatar {
  width: 50px;
  height: 50px;
  margin: -9px 0 0 7px;
  border-radius: 50%;
  background: #f0f0f0;
  color: #444;
  font-size: 22px;
  line-height: 50px;
  text-align: center;
}

/* ribbon */
.ribbon {
  height: 163px;
  flex: none;
  box-sizing: border-box;
  display: flex;
  background: #f0f0f0;
  border-bottom: 2px solid #cfcfcf;
}

.design-btn {
  width: 218px;
  height: 122px;
  margin: 21px 28px 0 24px;
  flex: none;
  background: #f0f0f0;
  border: 2px solid #cfcfcf;
  border-radius: 8px;
  font-family: inherit;
  font-size: 20px;
  font-weight: 700;
  color: #3c3c3c;
}

.ribbon-main {
  display: flex;
  flex-direction: column;
}

.ribbon-tabs {
  height: 47px;
  display: flex;
  margin-left: -16px;
  font-size: 21px;
  line-height: 44px;
}

.ribbon-tab {
  position: relative;
  padding: 0 46px;
}

.ribbon-tab.active {
  color: #0696d7;
}

.ribbon-tab.active::after {
  content: "";
  position: absolute;
  left: 23px;
  right: 23px;
  bottom: 0;
  height: 6px;
  background: #0696d7;
}

.groups {
  display: flex;
  height: 108px;
}

.group {
  box-sizing: border-box;
  height: 102px;
  margin-top: 6px;
  display: flex;
  flex-direction: column;
  justify-content: space-between;
  border-right: 2px solid #cfcfcf;
}

.g-create { width: 518px; }
.g-modify { width: 538px; }
.g-assemble { width: 206px; }
.g-build { width: 197px; }
.g-inspect { width: 229px; }
.g-insert { width: 178px; }
.g-select { width: 222px; border-right: none; }

.icons {
  height: 64px;
  margin-top: 1px;
  display: flex;
  justify-content: center;
  align-items: center;
  gap: 22px;
}

.g-create .icons {
  justify-content: flex-start;
  padding-left: 4px;
}

.icons-modify {
  justify-content: flex-start;
  padding-left: 16px;
  gap: 23.6px;
}

.icons-assemble {
  justify-content: flex-start;
  padding-left: 31px;
  gap: 24px;
}

.ico {
  width: 64px;
  height: 64px;
  flex: none;
  overflow: visible;
}

.ico-active {
  width: 76px;
  height: 76px;
  margin: 0 -6px;
  flex: none;
  background: #0696d7;
}

.group-label {
  margin-bottom: -2px;
  text-align: center;
  font-size: 21px;
  line-height: 28px;
  white-space: nowrap;
}

.group-label .caret {
  border-left-width: 5px;
  border-right-width: 5px;
  border-top-width: 7px;
}

.label-create {
  padding-right: 22px;
}

/* viewport */
.viewport {
  position: relative;
  flex: 1;
  overflow: hidden;
  background: #fff;
}

.scene {
  position: absolute;
  left: 0;
  top: 0;
}

.dim-text {
  font-family: "DejaVu Sans", sans-serif;
  font-size: 27px;
  fill: #555;
}

.cube-text {
  font-family: "Open Sans", sans-serif;
  font-size: 24px;
  fill: #999;
}

.axis-z {
  font-family: "DejaVu Sans", sans-serif;
  font-size: 28px;
  font-weight: 700;
  text-anchor: middle;
  fill: #9d9dff;
}

.axis-y {
  font-family: "DejaVu Sans", sans-serif;
  font-size: 24px;
  font-weight: 700;
  text-anchor: middle;
  fill: #72e872;
}

.nav-panel {
  position: absolute;
  left: 8px;
  top: 9px;
  width: 686px;
  height: 49px;
  box-sizing: border-box;
  background: #f0f0f0;
  border: 2px solid #d0d0d0;
  border-bottom-width: 3px;
}

.nav-head {
  height: 100%;
  display: flex;
  align-items: center;
  padding-left: 8px;
}

.nav-title {
  margin-left: 20px;
  font-size: 21px;
  color: #555;
}

.pin-btn {
  width: 28px;
  height: 28px;
  margin-left: auto;
  box-sizing: border-box;
  display: flex;
  align-items: center;
  justify-content: center;
  background: #e4e4e4;
  border: 1px solid #999;
}

.pin-minus {
  width: 16px;
  height: 16px;
  border-radius: 50%;
  background: linear-gradient(#2c2c2c 0 6px, #ddd 6px 10px, #2c2c2c 10px);
}

.sizer {
  width: 4px;
  height: 24px;
  margin: 0 2px 0 9px;
  border-left: 2px solid #888;
  border-right: 1px solid #bbb;
  box-sizing: border-box;
}

.tree {
  position: absolute;
  left: 0;
  top: 69px;
  margin: 0;
  padding: 0;
  list-style: none;
  display: flex;
  flex-direction: column;
  gap: 8px;
  font-size: 21.4px;
  color: #444;
}

.tree-line {
  display: flex;
  height: 40px;
  padding-left: 45px;
}

.tree-line.depth-1 { padding-left: 81px; }
.tree-line.depth-2 { padding-left: 117px; }

.twist {
  width: 35px;
  flex: none;
  display: flex;
  align-items: center;
}

.tw-open {
  width: 14px;
  height: 18px;
}

.tw-closed {
  width: 14px;
  height: 18px;
  margin-left: 2px;
}

.tree-row {
  position: relative;
  display: flex;
  align-items: center;
  padding-left: 6px;
  padding-right: 20px;
  background: #f3f3f3;
}

.row-ico {
  width: 32px;
  height: 32px;
  flex: none;
  margin-right: 18px;
}

.gear-ico {
  color: #999;
}

.row-text {
  margin-left: 10px;
  white-space: nowrap;
}

.root-label,
.active-label {
  position: relative;
  display: flex;
  align-items: center;
  font-weight: 700;
  font-size: 20px;
  color: #fff;
  white-space: nowrap;
}

.root-label {
  width: 236px;
  height: 32px;
  margin-left: -6px;
  padding-left: 9px;
  box-sizing: border-box;
  background: #999;
}

.root-cube {
  width: 26px;
  height: 34px;
  margin-right: 32px;
}

.radio {
  width: 25px;
  height: 25px;
  margin: 0 -4px 0 9px;
  box-sizing: border-box;
  border-radius: 50%;
  border: 1px solid #555;
  background: radial-gradient(circle, #3a3a3a 0 5px, #dfe3ec 6px);
}

.active-label {
  width: 172px;
  height: 40px;
  margin: 0 -20px 0 -6px;
  padding-left: 7px;
  box-sizing: border-box;
  background: #0696d7;
}

.act-sketch {
  width: 28px;
  height: 32px;
  margin-right: 32px;
}

.wave {
  position: absolute;
  left: 49px;
  right: 0;
  bottom: 0;
  height: 7px;
  background: repeating-linear-gradient(115deg, #7088aa 0 5px, transparent 5px 12px);
}

.wave-active {
  left: 0;
  right: 8px;
  bottom: 2px;
  background: repeating-linear-gradient(115deg, #7d8698 0 5px, transparent 5px 12px);
}

/* extrude dialog */
.extrude {
  position: absolute;
  left: 2948px;
  top: 250px;
  width: 499px;
  box-sizing: border-box;
  background: #f0f0f0;
  border: 2px solid #d0d0d0;
  font-size: 21px;
  color: #444;
}

.ex-head {
  height: 46px;
  box-sizing: border-box;
  display: flex;
  align-items: center;
  border-bottom: 2px solid #d0d0d0;
  padding: 0 8px 0 3px;
}

.ex-sizer {
  width: 4px;
  height: 20px;
  border-left: 1px solid #999;
  border-right: 2px solid #888;
  box-sizing: border-box;
}

.ex-pin {
  width: 18px;
  height: 18px;
  margin-left: 19px;
  border-radius: 50%;
  background: linear-gradient(#2c2c2c 0 7px, #ddd 7px 11px, #2c2c2c 11px);
}

.ex-title {
  margin-left: 9px;
  font-size: 20px;
  color: #666;
}

.ex-arrows {
  margin-left: auto;
}

.ex-body {
  padding: 5px 0 0;
  height: 566px;
  box-sizing: border-box;
  border-bottom: 3px solid #d0d0d0;
  display: flex;
  flex-direction: column;
  gap: 6px;
}

.ex-row {
  height: 54px;
  flex: none;
  display: grid;
  grid-template-columns: 211px 221px;
  align-items: center;
}

.ex-label {
  padding-left: 25px;
  white-space: nowrap;
}

.type-btns {
  display: flex;
  align-items: center;
  gap: 20px;
}

.type-on {
  width: 46px;
  height: 54px;
  display: flex;
  align-items: center;
  justify-content: center;
  background: #0696d7;
  border-radius: 2px;
}

.type-off {
  flex: none;
}

.sel-wrap {
  display: flex;
  align-items: center;
  gap: 22px;
}

.sel-btn {
  width: 164px;
  height: 54px;
  box-sizing: border-box;
  padding-left: 13px;
  display: flex;
  align-items: center;
  gap: 11px;
  flex: none;
  background: #0696d7;
  color: #fff;
  white-space: nowrap;
  border-radius: 2px;
}

.field {
  height: 54px;
  box-sizing: border-box;
  background: #fff;
  border: 2px solid #c6c6c6;
  display: flex;
  align-items: center;
  white-space: nowrap;
}

.field.input {
  width: 219px;
  height: 51px;
  margin-left: 1px;
  padding-left: 6px;
}

.fld-ico {
  width: 36px;
  height: 32px;
  margin: 0 8px 0 2px;
  flex: none;
}

.fld-caret,
.fld-caret-tight {
  margin-left: auto;
  margin-right: 9px;
  border-top-color: #333;
}

.ex-divider {
  height: 2px;
  margin: 7px 26px 5px 3px;
  flex: none;
  background: #ccc;
}

.ex-objects {
  margin-top: 14px;
  padding-left: 18px;
  display: flex;
  align-items: center;
  gap: 19px;
}

.tri-right {
  width: 0;
  height: 0;
  border-top: 8px solid transparent;
  border-bottom: 8px solid transparent;
  border-left: 12px solid #333;
}

.ex-objects b {
  font-size: 20px;
}

.ex-foot {
  height: 71px;
  display: flex;
  align-items: center;
  padding: 0 9px 0 16px;
  gap: 12px;
}

.info {
  width: 24px;
  height: 24px;
  margin-right: auto;
  border-radius: 50%;
  background: #000;
  color: #fff;
  font-weight: 700;
  font-size: 18px;
  line-height: 24px;
  text-align: center;
}

.ex-btn {
  width: 120px;
  height: 40px;
  background: #efefef;
  border: 2px solid #c4c4c4;
  font-family: inherit;
  font-size: 22px;
  color: #777;
  padding: 0;
}

/* overlays on the canvas */
.tooltip {
  position: absolute;
  left: 1678px;
  top: 1248px;
  width: 612px;
  height: 37px;
  box-sizing: border-box;
  background: #ececec;
  border: 1px solid #aaa;
  border-top-color: #888;
  border-bottom: 2px solid #aaa;
  box-shadow: 0 14px 36px rgba(0, 0, 0, 0.28);
  font-family: "Liberation Sans", sans-serif;
  font-size: 27.3px;
  line-height: 34px;
  text-align: center;
  color: #000;
  white-space: nowrap;
}

.num-box {
  position: absolute;
  left: 1872px;
  top: 1305px;
  width: 229px;
  height: 43px;
  display: flex;
  align-items: center;
  background: #f0f0f0;
}

.num-grip {
  width: 16px;
  height: 100%;
  margin-left: 8px;
  box-sizing: border-box;
  border-left: 2px dotted #ccc;
  border-right: 2px solid #ccc;
}

.num-input {
  width: 153px;
  height: 39px;
  margin-left: 4px;
  box-sizing: border-box;
  background: #fff;
  border: 2px solid #c4c4c4;
  text-align: center;
  font-size: 20px;
  line-height: 35px;
  color: #444;
}

.num-dots {
  margin-left: 22px;
  display: flex;
  flex-direction: column;
  gap: 5px;
}

.num-dots i {
  width: 5px;
  height: 5px;
  border-radius: 50%;
  background: #999;
}

.comments {
  position: absolute;
  left: 9px;
  top: 1775px;
  width: 685px;
  height: 49px;
  box-sizing: border-box;
  display: flex;
  align-items: center;
  padding: 4px 0 0 30px;
  background: #f0f0f0;
  border-right: 2px solid #d0d0d0;
  border-bottom: 4px solid #d0d0d0;
}

.plus-badge {
  position: relative;
  width: 16px;
  height: 16px;
  margin-left: auto;
  border-radius: 50%;
  background: #2c2c2c;
}

.plus-badge::after {
  content: "+";
  position: absolute;
  inset: 0;
  color: #ddd;
  font-size: 16px;
  font-weight: 700;
  line-height: 15px;
  text-align: center;
}

.nav-tools {
  position: absolute;
  left: 1491px;
  top: 1777px;
  height: 48px;
  width: 472px;
  box-sizing: border-box;
  padding-left: 5px;
  display: flex;
  align-items: center;
  gap: 18px;
  background: #f0f0f0;
}

.tool {
  display: flex;
  align-items: center;
  gap: 6px;
}

.tool-ico {
  width: 32px;
  height: 42px;
}

.tool-caret {
  border-left-width: 6px;
  border-right-width: 6px;
  border-top-width: 10px;
}

/* timeline */
.timeline {
  height: 99px;
  flex: none;
  box-sizing: border-box;
  display: flex;
  background: #f0f0f0;
  border-top: 2px solid #dcdcdc;
}

.controls {
  display: flex;
  align-items: center;
  height: 94px;
  padding-left: 9px;
}

.ctl {
  width: 50px;
  display: flex;
  justify-content: center;
}

.steps {
  position: relative;
  display: flex;
  align-self: flex-start;
  margin: 21px 0 0 25px;
}

.step-active {
  width: 48px;
  height: 48px;
  display: flex;
  align-items: center;
  justify-content: center;
  background: #0696d7;
  border-radius: 4px;
}

.step {
  width: 48px;
  height: 32px;
  margin-top: 8px;
  box-sizing: border-box;
  padding-left: 9px;
}

.bracket {
  position: absolute;
  left: 25px;
  top: 46px;
  width: 191px;
  height: 12px;
  display: flex;
  justify-content: space-between;
  box-sizing: border-box;
  border-bottom: 4px solid #ccc;
}

.bracket i {
  width: 3px;
  background: #ccc;
}

.marker {
  position: absolute;
  left: 228px;
  top: -4px;
}

.tl-gear {
  margin: 33px 26px 0 auto;
  color: #999;
}

.tray {
  position: absolute;
  left: 3062px;
  top: 2078px;
  width: 382px;
  background: #ececec;
}

.tray-title {
  height: 39px;
  box-sizing: border-box;
  padding-left: 10px;
  display: flex;
  align-items: center;
  gap: 12px;
  background: #e9e9e9;
  border-bottom: 2px solid #c8c8c8;
  font-family: "Liberation Sans", sans-serif;
  font-size: 22.5px;
  color: #aaa;
  white-space: nowrap;
}

.tray-title i {
  width: 18px;
  height: 18px;
  box-sizing: border-box;
  border-radius: 50%;
  background: #d0d0ce;
  border: 1px solid #bbb;
}

.tray-title span {
  margin-left: 2px;
}

.tray-msg {
  height: 47px;
  text-align: center;
  font-family: "Open Sans", sans-serif;
  font-size: 23px;
  font-weight: 700;
  line-height: 46px;
  color: #2b2b2b;
  white-space: nowrap;
}
</style>

<style>
html,
body {
  margin: 0;
  background: #fff;
  overflow: hidden;
}
</style>
